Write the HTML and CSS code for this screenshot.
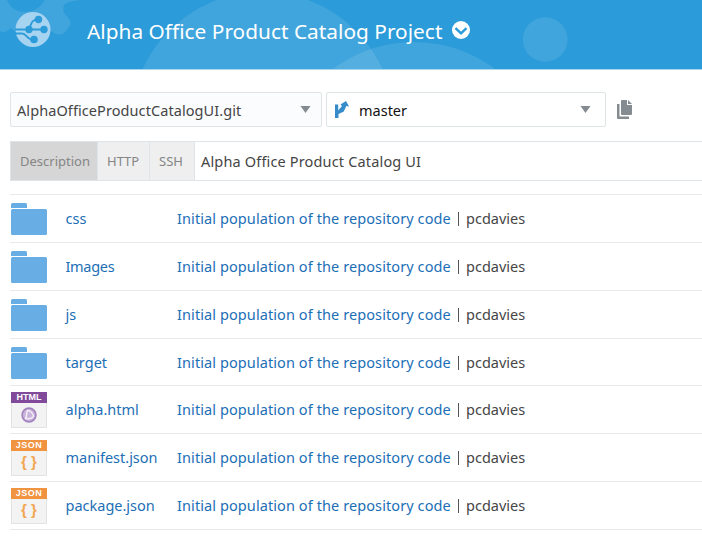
FILE: index.html
```html
<!DOCTYPE html>
<html lang="en">
<head>
<meta charset="utf-8">
<title>Alpha Office Product Catalog Project</title>
<link rel="stylesheet" href="styles.css">
</head>
<body>
<svg class="defs" width="0" height="0">
  <symbol id="folder" viewBox="0 0 36 33"><path fill="#68ade3" d="M1.500 0h13q1.500 0 1.500 1.500V5H0V1.500Q0 0 1.500 0zM1.500 6h33q1.500 0 1.500 1.500v23q0 1.500-1.500 1.500h-33Q0 32 0 30.500v-23Q0 6 1.500 6z"/></symbol>
  <symbol id="globe" viewBox="0 0 16 16"><circle cx="8" cy="8" r="6.900" fill="#c9b5da" stroke="#a383bf" stroke-width="1.600"/><path d="M5 12.500C5.500 9 5.500 5 6.500 3.500 9 3 12.500 7 12.500 9.500 10.500 12 7 12 4 11" fill="none" stroke="#f3edf7" stroke-width="1.400"/></symbol>
</svg>
<header class="header">
  <svg class="pattern" width="702" height="69" viewBox="0 0 702 69">
    <g fill="#fff" fill-opacity=".105">
      <path fill-rule="evenodd" d="M0 0H80Q70 1 65 4 62 7 64 13L69 19Q72 23 69 27L64 33Q60 36 54 33L49 30Q39 36 30 41Q18 34 11 28L7 31Q3 33 0 31zM7 0Q12 12 25 12T45 0z"/>
      <circle cx="262.500" cy="124" r="132"/>
      <circle cx="414" cy="177" r="135"/>
      <circle cx="545.200" cy="39.500" r="22.300"/>
    </g>
  </svg>
  <svg class="logo" width="36" height="36" viewBox="0 0 36 36">
    <circle cx="18" cy="17.500" r="17.500" fill="#a6d3ef"/>
    <g fill="none" stroke="#2b9bd9" stroke-width="1.800"><path d="M0 17.500H28M13 17.500C17 14 15 7.500 23 7.500M0 21.500H7C12 21.500 11 27.500 18 27.500"/></g>
    <g fill="#2b9bd9"><circle cx="23.500" cy="7.500" r="3.700"/><circle cx="14" cy="17.500" r="3.700"/><circle cx="29" cy="17.500" r="3.700"/><circle cx="19" cy="27.500" r="3.800"/></g>
  </svg>
  <h1 class="title">Alpha Office Product Catalog Project</h1>
  <svg class="chevron" width="18" height="18" viewBox="0 0 18 18"><circle cx="9" cy="9" r="9" fill="#fff"/><path d="M3.500 7.200L9 12.300l5.500-5.100" fill="none" stroke="#2b9bd9" stroke-width="2.500"/></svg>
</header>
<main class="main">
  <div class="toolbar">
    <div class="select repo"><span class="repo-name">AlphaOfficeProductCatalogUI.git</span><svg width="11" height="7" viewBox="0 0 11 7"><path d="M.5 0h10L5.500 7z" fill="#858c91"/></svg></div>
    <div class="select branch"><svg class="branch-icon" width="14" height="17" viewBox="0 0 14 17"><path d="M0 3.500h3.200v6L7 5 5.500 3.500 11 0l3 5.500-2.700-.5-2.500 5.500L3.500 13v4H0z" fill="#368bcb"/></svg><span class="branch-name">master</span><svg width="11" height="7" viewBox="0 0 11 7"><path d="M.5 0h10L5.500 7z" fill="#858c91"/></svg></div>
    <svg class="copy" width="15" height="19" viewBox="0 0 15 19"><path fill="#858c91" d="M0 4h2.500v12.500H12V19H1q-1 0-1-1zM5 0h5v5h5v9q0 1-1 1H5q-1 0-1-1V1q0-1 1-1zM11 0l4 4h-4z"/></svg>
  </div>
  <div class="info">
    <span class="tab active">Description</span><span class="tab http">HTTP</span><span class="tab ssh">SSH</span><span class="info-text">Alpha Office Product Catalog UI</span>
  </div>
  <div class="files">
    <div class="row"><svg class="folder"><use href="#folder"/></svg><a class="name">css</a><a class="commit">Initial population of the repository code</a><i class="bar"></i><span class="author">pcdavies</span></div>
    <div class="row"><svg class="folder"><use href="#folder"/></svg><a class="name images">Images</a><a class="commit">Initial population of the repository code</a><i class="bar"></i><span class="author">pcdavies</span></div>
    <div class="row"><svg class="folder"><use href="#folder"/></svg><a class="name">js</a><a class="commit">Initial population of the repository code</a><i class="bar"></i><span class="author">pcdavies</span></div>
    <div class="row"><svg class="folder"><use href="#folder"/></svg><a class="name">target</a><a class="commit">Initial population of the repository code</a><i class="bar"></i><span class="author">pcdavies</span></div>
    <div class="row"><div class="file html"><b>HTML</b><svg width="16" height="16"><use href="#globe"/></svg></div><a class="name">alpha.html</a><a class="commit">Initial population of the repository code</a><i class="bar"></i><span class="author">pcdavies</span></div>
    <div class="row"><div class="file json"><b>JSON</b><span>{ }</span></div><a class="name">manifest.json</a><a class="commit">Initial population of the repository code</a><i class="bar"></i><span class="author">pcdavies</span></div>
    <div class="row"><div class="file json"><b>JSON</b><span>{ }</span></div><a class="name">package.json</a><a class="commit">Initial population of the repository code</a><i class="bar"></i><span class="author">pcdavies</span></div>
  </div>
</main>
</body>
</html>
```
FILE: styles.css
```css
* { box-sizing: border-box; }
body { margin: 0; width: 702px; height: 547px; overflow: hidden; background: #fff; font: 14.5px/20px "Noto Sans", sans-serif; color: #454545; }
svg { display: block; flex: none; }
.defs { position: absolute; }
.header { position: relative; height: 70px; display: flex; background: #2b9bd9; border-bottom: 1px solid #a9d5ef; }
.pattern { position: absolute; left: 0; top: 0; }
.logo { position: relative; margin: 12px 0 0 15px; }
.title { position: relative; width: 365px; margin: 16px 0 0 36px; font-size: 20.8px; line-height: 30px; letter-spacing: .03px; font-weight: 400; color: #fff; white-space: nowrap; }
.chevron { position: relative; margin: 20.5px 0 0 0; }
.main { padding: 22px 0 0 10px; }
.toolbar { display: flex; }
.select { height: 35px; display: flex; align-items: center; justify-content: space-between; border: 1px solid #dfe4e7; border-radius: 2px; white-space: nowrap; }
.repo { width: 312px; padding: 0 10px 0 6px; background: #fbfcfe; }
.repo-name { letter-spacing: .08px; }
.branch { width: 280px; margin-left: 4px; padding: 0 14px 0 8px; color: #111; }
.branch-name { flex: 1; margin-left: 10px; }
.copy { margin: 8px 0 0 11px; }
.info { display: flex; height: 40px; margin-top: 14px; border: 1px solid #dfe4e8; border-right: 0; line-height: 38px; white-space: nowrap; }
.tab { padding-left: 9px; border-right: 1px solid #dfe4e8; background: #efefef; color: #858585; font-size: 13px; }
.active { width: 87px; background: #d6d6d6; }
.http { width: 52px; }
.ssh { width: 45px; }
.info-text { padding-left: 6px; letter-spacing: .16px; }
.files { margin-top: 13px; border-top: 1px solid #e9eaeb; }
.row { display: grid; grid-template-columns: 55.5px 111.500px 281px 8px 1fr; height: 47.85px; border-bottom: 1px solid #e9eaeb; line-height: 47px; white-space: nowrap; }
.name, .commit { color: #1c6fb6; }
.commit { letter-spacing: .09px; }
.images { letter-spacing: -.3px; }
.folder { width: 36px; height: 33px; margin: 8px 0 0 1px; }
.bar { width: 1px; height: 14px; margin-top: 17px; background: #555; }
.file { width: 36px; height: 36px; margin: 6px 0 0 1px; border: 1px solid #e2e2e2; background: #f3f3f3; }
.file b { display: block; height: 11px; margin: -1px -1px 0; color: #fff; font: bold 9px/11px "Liberation Sans", sans-serif; text-align: center; }
.html b { background: #814a9a; }
.json b { background: #f09442; letter-spacing: .5px; }
.file svg { margin: 4px auto 0; }
.file span { display: block; margin-top: 1px; text-align: center; color: #f1a650; font: bold 15px/20px "Liberation Sans", sans-serif; }
```
